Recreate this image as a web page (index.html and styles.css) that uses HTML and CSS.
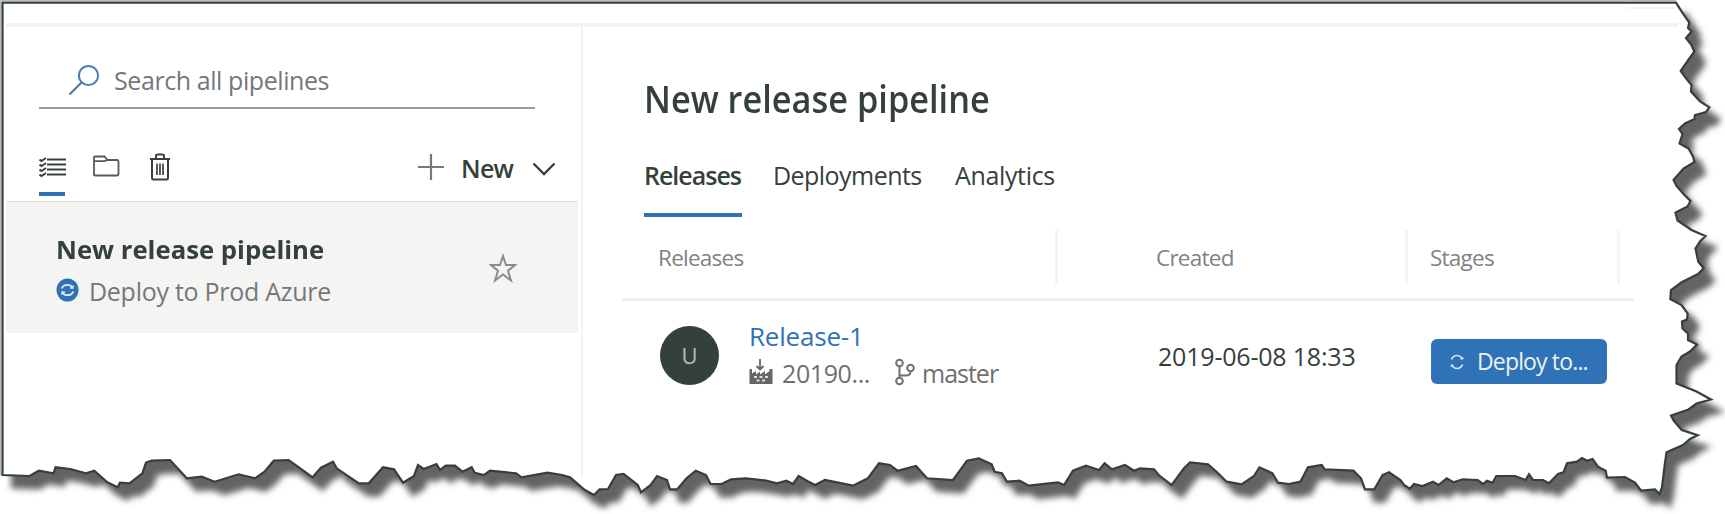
FILE: index.html
```html
<!DOCTYPE html>
<html lang="en">
<head>
<meta charset="utf-8">
<title>New release pipeline</title>
<link rel="stylesheet" href="styles.css">
</head>
<body>
<svg class="paper" viewBox="0 0 1725 514" aria-hidden="true">
  <defs>
    <filter id="soft" x="-5%" y="-5%" width="110%" height="110%"><feGaussianBlur stdDeviation="3"/></filter>
    <path id="sheet" d="M2.5 2.7H1676L1681.7 11.7 1689.3 22.7 1688 28 1691.5 31.5 1686 38 1691.5 45 1694.3 51.7 1688.3 60 1680.7 71 1686 78.3 1691.5 85 1691 91.5 1700 101.5 1709.3 107.3 1706 112 1695 115 1694.5 119 1685 123.5 1679 129 1682.5 134 1679.5 143.5 1688.5 148.5 1693 156.5 1694.5 162 1683.5 168.5 1673.5 180 1676.5 186 1683.5 194 1690.5 201 1687.5 206.5 1675.5 212.5 1677.5 220.5 1691.5 230 1705.5 236 1700 241.5 1695.5 248.5 1698.3 261.7 1703.7 268.3 1698 274 1681.7 282.3 1671 290 1670.3 299 1681.5 305 1687.7 313.5 1687 319.5 1682 321.5 1682.5 328.5 1688 333.5 1688 340 1697 344.5 1690 351.5 1681.5 356.5 1676.5 365 1676.5 383.5 1696.5 391.5 1711 399.5 1696.5 403.5 1688.5 409.5 1671 415.5 1674 421 1681.7 430 1697.7 435.3 1690 439 1683 445 1666.5 452.3 1665 463 1662 487 1659.5 494 1655 489.5 1641 490.5 1635 482.5 1625 477 1607 477.5 1605.7 470.7 1598 466.7 1592.6 459 1587 460.7 1582 458 1577 461.7 1567 463.3 1563.5 472.3 1558 474 1549 483.3 1543 480 1533 480 1529 474.3 1525.5 480 1515 476 1496.3 476 1492.6 482.7 1487 480.7 1483 484 1477.7 480 1462.8 479.3 1453.4 482.3 1446.7 478.3 1438.5 485 1433 481.7 1422.5 486 1414 484 1409.8 488.7 1404 485 1400.4 480 1389 472.3 1382.5 475 1374.3 489.3 1365 489.3 1361 478.3 1353.4 470.7 1324.7 469.3 1321.7 465 1308 467.3 1300.4 481.7 1289 484 1278 482.7 1272.5 473.3 1259.4 467.3 1254 476 1241.5 484.3 1226.6 481.7 1216.5 471.7 1208 464.3 1190 462.3 1184 468.3 1171.7 485 1158.7 475 1154 469.3 1140 468.3 1134 470.7 1125 465 1112 469.3 1104.6 463.3 1099 470 1086 465.7 1073 470.7 1064 485 1058 482.3 1028.7 485.7 1019.5 480.7 1007 481.7 1002 473.3 994.7 471.7 991.7 464.3 978.8 458.3 967 460.7 953 480 927 478.3 916 466 897.4 470.7 890 465 879 463.3 867.8 478.3 853 485.7 825 480 815 485 806.8 480.7 798.6 476 793 484 786.4 480.7 777 483.3 766 480.7 745.7 478.3 731 479.3 721.7 484 710.6 484 706 475 695.8 470.7 686.5 478.3 677.3 489.3 670 489.3 667 480 657 476 650.7 485 641 492.3 637.7 485 623.6 474 616 475 608 489 599.6 489.3 594 495 584.8 490 570 477.3 562 475 547.5 472.7 521.6 477.3 516 473.3 490 470.7 484 475 474.7 472.7 471.7 467.3 462.4 471.7 455 465.7 445.8 465.7 440 470 436.5 464 423.6 469 418 465 414 476 403 482.7 394 469.3 383 467.3 368.8 483.3 358.9 483.3 336.7 468.3 333 461.7 321 467.7 312.6 477.3 297.8 466.7 288.6 460 273.8 460.7 264.5 471.7 255 478.3 238.6 474.3 214.6 481.7 201.6 476.7 186.8 478.3 170 460 151.7 460.7 146 462.7 142.4 473.3 129.5 483.3 120 482.7 117.6 487.3 107.3 482.3 94.3 470.7 85.8 473.3 70.3 469 55.5 467.3 53.6 473.3 38.8 470.7 29.6 476 2.5 475Z"/>
  </defs>
  <use href="#sheet" class="paper-shadow" transform="translate(10 12)" filter="url(#soft)"/>
  <use href="#sheet" class="paper-sheet"/>
  <path class="paper-edge" d="M0.5 475V.5H1676"/>
  <path class="paper-dash" d="M1628 8h48"/>
</svg>
<div class="app">
  <div class="topline"></div>
  <aside class="sidebar">
    <div class="search">
      <svg width="32" height="32" viewBox="0 0 32 32"><circle cx="20.5" cy="11.5" r="9.6" fill="none" stroke="#4a7fb8" stroke-width="2"/><path d="M13.5 18.5L1.5 30.5" stroke="#56789c" stroke-width="2.2"/></svg>
      <span>Search all pipelines</span>
    </div>
    <div class="tools">
      <div class="tool active">
        <svg width="28" height="28" viewBox="0 0 28 28" fill="none" stroke="#38423d" stroke-width="1.8"><path d="M8 6.5h19M8 11.500h19M8 16.500h19M8 21.500h19"/><path d="M.5 6.500l2 1.500 4.500-3M.5 11.500l2 1.500 4.500-3M.5 16.500l2 1.500 4.500-3M.5 21.500l2 1.500 4.500-3" stroke-width="2"/></svg>
      </div>
      <div class="tool folder">
        <svg width="28" height="28" viewBox="0 0 28 28" fill="none" stroke="#555c58" stroke-width="1.8"><path d="M2 22.500V4.500Q2 3.500 3 3.500H12.500L15.500 7H25Q26.500 7 26.500 8.500V20.500Q26.500 22.500 25 22.500H3Q2 22.500 2 21.500"/><path d="M2.500 8.200H12.500L15.500 7"/></svg>
      </div>
      <div class="tool trash">
        <svg width="22" height="28" viewBox="0 0 22 28" fill="none" stroke="#38423d" stroke-width="2"><path d="M1 6H21M7 5.500V3Q7 1.500 8.500 1.500H13.500Q15 1.500 15 3V5.500M3 6.500V25Q3 26.500 4.500 26.500H17.500Q19 26.500 19 25V6.500"/><path d="M8 10.500V22M11 10.500V22M14 10.500V22" stroke-width="1.7"/></svg>
      </div>
      <div class="new">
        <svg width="28" height="28" viewBox="0 0 28 28" stroke="#747a77" stroke-width="2.2"><path d="M14 1V27M1 14H27"/></svg>
        <span>New</span>
        <svg class="chev" width="24" height="14" viewBox="0 0 24 14" fill="none" stroke="#38423d" stroke-width="2.400"><path d="M1.500 1.500L12 12L22.500 1.500"/></svg>
      </div>
    </div>
    <div class="item">
      <div class="item-text">
        <div class="item-title">New release pipeline</div>
        <div class="item-sub">
          <svg width="23" height="24" viewBox="0 0 23 24"><ellipse cx="11.500" cy="12" rx="11" ry="11.500" fill="#3072b8"/><g fill="none" stroke="#e5e9ee" stroke-width="1.800"><path d="M5.500 10.500Q7.500 6.800 11.500 6.800Q15 6.800 16.500 9.500M17.500 13.500Q15.500 17.200 11.500 17.200Q8 17.200 6.500 14.500"/><path d="M14 10H17V7.500M9 14H6V16.500" stroke-width="1.300"/></g></svg>
          <span>Deploy to Prod Azure</span>
        </div>
      </div>
      <svg class="star" width="28" height="30" viewBox="0 0 28 30"><path d="M14 3L17 12H26L19 17.700L22 27.500L14 21.500L6 27.500L9 17.700L2 12H11Z" fill="none" stroke="#8a8c8e" stroke-width="2"/></svg>
    </div>
  </aside>
  <main class="main">
    <h1>New release pipeline</h1>
    <nav class="tabs">
      <div class="tab t-rel selected"><span>Releases</span></div>
      <div class="tab t-dep"><span>Deployments</span></div>
      <div class="tab t-ana"><span>Analytics</span></div>
    </nav>
    <div class="thead">
      <div class="th"><span>Releases</span></div>
      <div class="th created"><span>Created</span></div>
      <div class="th stages"><span>Stages</span></div>
    </div>
    <div class="trow">
      <div class="release">
        <div class="avatar">U</div>
        <div class="release-text">
          <div class="release-name">Release-1</div>
          <div class="release-meta">
            <svg width="24" height="26" viewBox="0 0 24 26"><path d="M11 0V10M7.500 7L11 10.500L14.500 7" fill="none" stroke="#666" stroke-width="1.800"/><path d="M.5 10H3V14.500L7 12V15.500L11 12.500V15.500L16 12V15.500L20.500 12V10H23.500V25H.5Z" fill="#666"/><path d="M5 18h3M10.500 18h3M16 18h3M7.500 21.500h3M13 21.500h3" stroke="#ddd" stroke-width="1.800"/></svg>
            <span class="build">20190...</span>
            <svg class="branch" width="22" height="28" viewBox="0 0 22 28" fill="none" stroke="#707070" stroke-width="2"><circle cx="5.500" cy="5" r="3.300"/><circle cx="5.500" cy="23" r="3.300"/><circle cx="16.500" cy="10" r="3.300"/><path d="M5.500 8.300V19.700M16.500 13.300Q16.500 17.500 12 17.500H5.500"/></svg>
            <span class="master">master</span>
          </div>
        </div>
      </div>
      <div class="date">2019-06-08 18:33</div>
      <div class="stage">
        <svg width="14" height="16" viewBox="0 0 14 16" fill="none" stroke="#dce4ee" stroke-width="1.700"><path d="M1.500 5.500Q3 1.500 7 1.500Q10.500 1.500 12 5M12.500 10.500Q11 14.500 7 14.500Q3.500 14.500 2 11"/><path d="M10.500 5H12.800V3M3.500 11H1.200V13" stroke-width="1.200"/></svg>
        <span>Deploy to...</span>
      </div>
    </div>
  </main>
</div>
</body>
</html>
```
FILE: styles.css
```css
* { box-sizing: border-box; }
body {
  margin: 0;
  width: 1725px;
  height: 514px;
  overflow: hidden;
  background: #fff;
  color: #34413a;
  font-family: "Open Sans", "Noto Sans", sans-serif;
  font-size: 25px;
  line-height: 34px;
  white-space: nowrap;
}
svg { display: block; flex: none; }

/* torn paper behind the page */
.paper { position: absolute; left: 0; top: 0; width: 1725px; height: 514px; z-index: -1; }
.paper-shadow { fill: #636363; stroke: #636363; stroke-width: 3; }
.paper-sheet { fill: #fff; stroke: #34413a; stroke-width: 2.2; }
.paper-edge { fill: none; stroke: #b8bcba; stroke-width: 1; }
.paper-dash { stroke: #e4e4e4; stroke-width: 1.500px; stroke-dasharray: 2 2; }

.app {
  display: grid;
  grid-template: 4px 450px / 577px 1107px;
  padding: 23px 0 0 6px;
}
.topline { grid-column: 1 / 3; width: 1672px; background: #f4f4f3; }
.sidebar { border-right: 2px solid #f3f3f3; }

.search {
  display: flex;
  align-items: flex-start;
  gap: 14px;
  width: 496px;
  height: 72px;
  margin: 10px 0 0 33px;
  padding: 27px 0 0 29px;
  border-bottom: 2px solid #9a9c9b;
  color: #75777a;
}
.search span { margin-top: -1px; letter-spacing: -.42px; }

.tools { display: flex; height: 92px; padding: 44px 0 0 33px; }
.tool { height: 43px; }
.tool.active { width: 26px; border-bottom: 4px solid #3072b8; }
.tool.folder { margin-left: 27px; }
.tool.trash { margin-left: 29px; }
.new { display: flex; margin-left: 246px; font-weight: 600; }
.new span { margin: -2px 0 0 16px; width: 54px; letter-spacing: -.7px; }
.new .chev { margin: 9px 0 0 17px; }

.item {
  display: flex;
  width: 572px;
  height: 132px;
  border-top: 1px solid #dcdcdc;
  background: #f4f4f3;
}
.item-text { width: 483px; padding: 30px 0 0 50px; }
.item-title {
  width: 320px;
  font-size: 25.500px;
  font-weight: 700;
  line-height: 34px;
  transform: scaleX(1.008);
  transform-origin: 0 0;
}
.item-sub { display: flex; align-items: flex-start; gap: 10px; margin-top: 8px; color: #75777a; }
.item-sub svg { margin-top: 4px; }
.item-sub span { letter-spacing: -.28px; }
.star { margin-top: 51px; }

.main { padding: 44px 0 0 61px; }
h1 {
  width: 400px;
  margin: 0;
  font-size: 38.500px;
  font-weight: 600;
  line-height: 54px;
  transform: scaleX(.892);
  transform-origin: 0 0;
}
.tabs { display: flex; height: 59px; margin-top: 33px; }
.tab { height: 59px; }
.t-rel { width: 98px; border-bottom: 4px solid #3072b8; font-weight: 600; letter-spacing: -1px; }
.t-dep { width: 183px; padding-left: 31px; letter-spacing: -.55px; }
.t-ana { padding-left: 30px; letter-spacing: -.35px; }

.thead {
  display: flex;
  width: 1012px;
  height: 84px;
  margin-left: -22px;
  padding-top: 13px;
  border-bottom: 3px solid #f1f1f0;
  color: #808285;
  font-size: 22.500px;
}
.th { width: 436px; height: 54px; padding: 11px 0 0 36px; border-right: 3px solid #f4f4f4; letter-spacing: -.75px; }
.th.created { width: 350px; padding-left: 98px; }
.th.stages { width: 212px; padding-left: 22px; }

.trow { display: flex; padding-left: 16px; }
.release { display: flex; width: 498px; padding-top: 25px; }
.avatar {
  width: 59px;
  height: 59px;
  border-radius: 50%;
  background: #34413a;
  color: #b9bcba;
  font-size: 22px;
  line-height: 59px;
  text-align: center;
}
.release-text { margin-left: 30px; }
.release-name { margin-top: -7px; color: #3072b8; font-size: 26px; font-weight: 500; letter-spacing: -.2px; }
.release-meta { display: flex; margin-top: 3px; color: #707070; }
.release-meta svg { margin-top: 3px; }
.build { width: 87px; margin-left: 9px; letter-spacing: -.4px; }
.release-meta .branch { margin: 2px 0 0 25px; }
.master { margin-left: 6px; letter-spacing: -1px; }
.date { width: 273px; padding-top: 38px; letter-spacing: -.2px; }
.stage {
  display: flex;
  width: 176px;
  height: 45px;
  margin-top: 38px;
  padding: 5px 0 0 19px;
  border-radius: 6px;
  background: #3072b8;
  color: #eef1f4;
  font-size: 23px;
  letter-spacing: -.85px;
}
.stage svg { margin: 10px 13px 0 0; }
```
